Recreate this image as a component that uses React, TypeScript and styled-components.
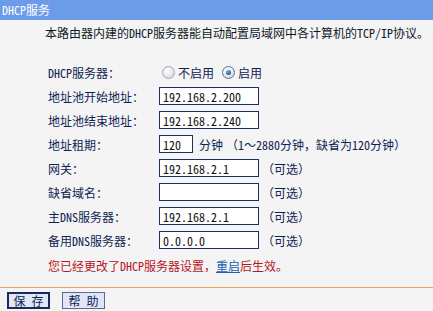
import React, { useState } from 'react'
import styled, { createGlobalStyle } from 'styled-components'

const GlobalStyle = createGlobalStyle`
  html, body {
    margin: 0;
    padding: 0;
    background: #f4f4f4;
  }
  body {
    font-family: "Noto Sans Mono CJK SC", "Noto Sans CJK SC", "Liberation Mono", monospace;
    font-size: 12px;
    color: #0f2352;
  }
`

const rows = [
  { label: '地址池开始地址：', value: '192.168.2.200' },
  { label: '地址池结束地址：', value: '192.168.2.240' },
]

const optionalRows = [
  { label: '网关：', value: '192.168.2.1' },
  { label: '缺省域名：', value: '' },
  { label: '主DNS服务器：', value: '192.168.2.1' },
  { label: '备用DNS服务器：', value: '0.0.0.0' },
]

export default function App() {
  const [enabled, setEnabled] = useState(true)

  return (
    <>
      <GlobalStyle />
      <StyledPage>
        <StyledHeader>DHCP服务</StyledHeader>
        <StyledIntro>本路由器内建的DHCP服务器能自动配置局域网中各计算机的TCP/IP协议。</StyledIntro>
        <StyledForm>
          <StyledLabel>DHCP服务器：</StyledLabel>
          <StyledField>
            <StyledRadioLabel onClick={() => setEnabled(false)}>
              <StyledRadio $checked={!enabled} />
              不启用
            </StyledRadioLabel>
            <StyledRadioLabel onClick={() => setEnabled(true)}>
              <StyledRadio $checked={enabled} />
              启用
            </StyledRadioLabel>
          </StyledField>

          {rows.map((r) => (
            <React.Fragment key={r.label}>
              <StyledLabel>{r.label}</StyledLabel>
              <StyledField>
                <StyledInput defaultValue={r.value} />
              </StyledField>
            </React.Fragment>
          ))}

          <StyledLabel>地址租期：</StyledLabel>
          <StyledField>
            <StyledInput $small defaultValue="120" />
            <StyledUnit>分钟</StyledUnit>
            <StyledHint>（1～2880分钟，缺省为120分钟）</StyledHint>
          </StyledField>

          {optionalRows.map((r) => (
            <React.Fragment key={r.label}>
              <StyledLabel>{r.label}</StyledLabel>
              <StyledField>
                <StyledInput defaultValue={r.value} />
                <StyledHint>（可选）</StyledHint>
              </StyledField>
            </React.Fragment>
          ))}
        </StyledForm>
        <StyledWarning>
          您已经更改了DHCP服务器设置，<StyledLink href="#">重启</StyledLink>后生效。
        </StyledWarning>
        <StyledDivider />
        <StyledButtonBar>
          <StyledButton $primary>保 存</StyledButton>
          <StyledButton>帮 助</StyledButton>
        </StyledButtonBar>
      </StyledPage>
    </>
  )
}

const StyledPage = styled.div`
  width: 433px;
  height: 311px;
  overflow: hidden;
  background: #f4f4f4;
`

const StyledHeader = styled.div`
  height: 20px;
  line-height: 20px;
  padding-left: 2px;
  background: #6c9be8;
  color: #ffffff;
  font-size: 12px;
`

const StyledIntro = styled.div`
  padding: 6px 0 0 45px;
  line-height: 14px;
  height: 14px;
  color: #101828;
  white-space: nowrap;
`

const StyledForm = styled.div`
  display: grid;
  grid-template-columns: 111px auto;
  grid-auto-rows: 24px;
  margin: 20px 0 0 48px;
`

const StyledLabel = styled.div`
  display: flex;
  align-items: center;
  white-space: nowrap;
`

const StyledField = styled.div`
  display: flex;
  align-items: center;
  white-space: nowrap;
`

const StyledRadioLabel = styled.span`
  display: inline-flex;
  align-items: center;
  margin-right: 8px;
  cursor: pointer;
  &:first-child {
    margin-left: 3px;
  }
`

const StyledRadio = styled.span<{ $checked?: boolean }>`
  position: relative;
  width: 11px;
  height: 11px;
  margin-right: 3px;
  border-radius: 50%;
  border: 1px solid ${(p) => (p.$checked ? '#5b6f94' : '#a4a9b1')};
  background: radial-gradient(circle at 40% 35%, #ffffff 0%, #e4e6ea 55%, #c3c7ce 100%);
  &::after {
    content: '';
    display: ${(p) => (p.$checked ? 'block' : 'none')};
    position: absolute;
    left: 3px;
    top: 3px;
    width: 5px;
    height: 5px;
    border-radius: 50%;
    background: radial-gradient(circle at 40% 35%, #7fb2f0 0%, #1a4fa8 70%, #123a80 100%);
  }
`

const StyledInput = styled.input<{ $small?: boolean }>`
  box-sizing: border-box;
  width: ${(p) => (p.$small ? '34px' : '100px')};
  height: 18px;
  padding: 0 3px;
  border: 1px solid #1c2f63;
  background: #ffffff;
  color: #111111;
  font-family: inherit;
  font-size: 12px;
  outline: none;
`

const StyledUnit = styled.span`
  margin-left: 6px;
`

const StyledHint = styled.span`
  margin-left: 3px;
`

const StyledWarning = styled.div`
  margin: 0 0 0 48px;
  height: 24px;
  line-height: 28px;
  color: #b8161f;
  white-space: nowrap;
`

const StyledLink = styled.a`
  color: #2060a8;
  text-decoration: underline;
`

const StyledDivider = styled.div`
  margin-top: 11px;
  height: 1px;
  background: #e6a468;
`

const StyledButtonBar = styled.div`
  display: flex;
  gap: 12px;
  padding: 4px 0 0 7px;
`

const StyledButton = styled.button<{ $primary?: boolean }>`
  box-sizing: border-box;
  width: 43px;
  height: 17px;
  padding: 0;
  line-height: 13px;
  font-family: inherit;
  font-size: 12px;
  color: #0f2352;
  background: #dfe6f6;
  border: ${(p) => (p.$primary ? '2px solid #1b2a5a' : '1px solid #5a6a93')};
  cursor: pointer;
`
